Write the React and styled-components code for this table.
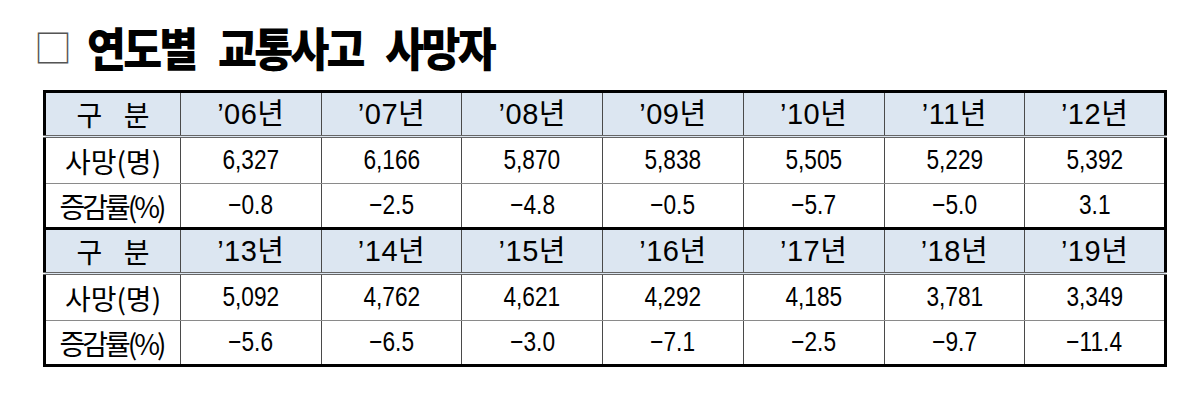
import React from "react";
import styled, { createGlobalStyle } from "styled-components";

const blocks = [
  {
    years: ["06", "07", "08", "09", "10", "11", "12"],
    deaths: ["6,327", "6,166", "5,870", "5,838", "5,505", "5,229", "5,392"],
    rates: ["−0.8", "−2.5", "−4.8", "−0.5", "−5.7", "−5.0", "3.1"],
  },
  {
    years: ["13", "14", "15", "16", "17", "18", "19"],
    deaths: ["5,092", "4,762", "4,621", "4,292", "4,185", "3,781", "3,349"],
    rates: ["−5.6", "−6.5", "−3.0", "−7.1", "−2.5", "−9.7", "−11.4"],
  },
];

const GlobalStyle = createGlobalStyle`
  body {
    margin: 0;
    background: #fff;
    color: #000;
    font-family: "Noto Sans CJK KR", sans-serif;
  }
`;

const Page = styled.div`
  padding: 24px 0 0 34px;
`;

const Title = styled.h1`
  display: flex;
  align-items: center;
  gap: 15px;
  margin: 0;
  height: 44px;
  font-size: 46px;
  font-weight: 900;
  line-height: 1;
`;

const Box = styled.span`
  font-size: 38px;
  font-weight: 400;
  color: #555;
`;

const Heading = styled.span`
  display: inline-block;
  letter-spacing: -3px;
  word-spacing: 17px;
  white-space: nowrap;
  transform: scaleX(0.92);
  transform-origin: left center;
`;

const Table = styled.table`
  margin: 22px 0 0 9px;
  width: 1124px;
  table-layout: fixed;
  border-collapse: collapse;
  border: 3px solid #000;
`;

const Block = styled.tbody`
  & + & {
    border-top: 3px solid #000;
  }
`;

const Row = styled.tr`
  height: ${(p) => p.$height}px;
  background: ${(p) => (p.$head ? "#dce6f1" : "#fff")};

  td {
    border-bottom: ${(p) => (p.$head ? "3px double #666" : "1px solid #8a8a8a")};
  }
  &:last-child td {
    border-bottom: none;
  }
`;

const Cell = styled.td`
  padding: 0;
  text-align: center;
  vertical-align: middle;
  border-left: 1px solid #4a4a4a;
  line-height: 1;
`;

const Label = styled.span`
  display: inline-block;
  font-size: 28px;
  letter-spacing: ${(p) => p.$spacing}px;
  margin-right: ${(p) => -p.$spacing}px;
`;

const Value = styled.span`
  display: inline-block;
  font-family: "Liberation Sans", "Noto Sans CJK KR", sans-serif;
  font-size: 27px;
  transform: scaleX(0.84);
`;

const Year = styled.span`
  display: inline-block;
  font-family: "Liberation Sans", "Noto Sans CJK KR", sans-serif;
  font-size: 29px;
  letter-spacing: 0.5px;
`;

function TableBlock({ years, deaths, rates }) {
  return (
    <Block>
      <Row $head $height={45}>
        <Cell>
          <Label $spacing={7.5}>구 분</Label>
        </Cell>
        {years.map((y) => (
          <Cell key={y}>
            <Year>’{y}년</Year>
          </Cell>
        ))}
      </Row>
      <Row $height={47}>
        <Cell>
          <Label $spacing={0}>사망(명)</Label>
        </Cell>
        {deaths.map((d, i) => (
          <Cell key={i}>
            <Value>{d}</Value>
          </Cell>
        ))}
      </Row>
      <Row $height={45}>
        <Cell>
          <Label $spacing={-3}>증감률(%)</Label>
        </Cell>
        {rates.map((r, i) => (
          <Cell key={i}>
            <Value>{r}</Value>
          </Cell>
        ))}
      </Row>
    </Block>
  );
}

export default function App() {
  return (
    <Page>
      <GlobalStyle />
      <Title>
        <Box>□</Box>
        <Heading>연도별 교통사고 사망자</Heading>
      </Title>
      <Table>
        <colgroup>
          <col style={{ width: 136 }} />
          {Array.from({ length: 7 }).map((_, i) => (
            <col key={i} />
          ))}
        </colgroup>
        {blocks.map((b, i) => (
          <TableBlock key={i} {...b} />
        ))}
      </Table>
    </Page>
  );
}
